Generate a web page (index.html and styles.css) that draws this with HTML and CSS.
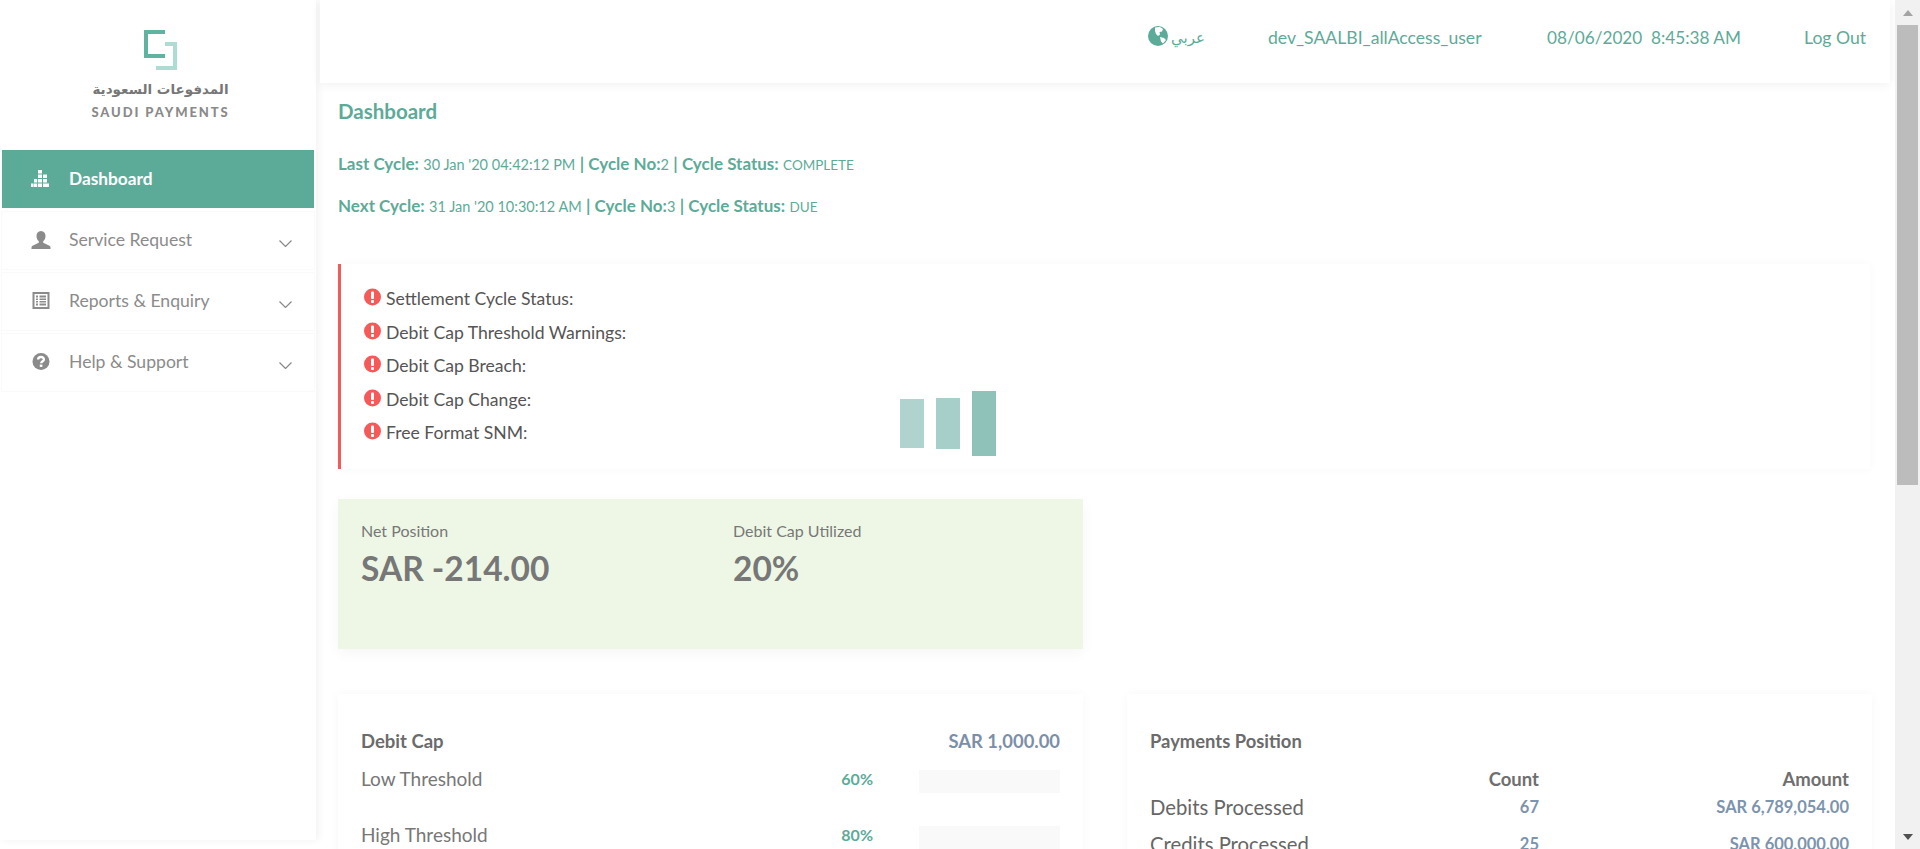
FILE: index.html
```html
<!DOCTYPE html>
<html lang="en">
<head>
<meta charset="utf-8">
<title>Dashboard</title>
<link rel="stylesheet" href="styles.css">
</head>
<body>
<div class="window">
<div class="app">
  <aside class="sidebar">
    <div class="brand">
      <svg class="brand-mark" width="34" height="40" viewBox="0 0 34 40">
        <path class="mark-dark" d="M21 0H0V28H21V24H4V4H21Z"/>
        <path class="mark-light" d="M21 12H33V40H12V36H29V16H21Z"/>
      </svg>
      <div class="brand-ar" lang="ar" dir="rtl">المدفوعات السعودية</div>
      <div class="brand-en">SAUDI PAYMENTS</div>
    </div>
    <nav class="menu">
      <a class="menu-item active">
        <svg class="menu-icon icon-stats" width="18" height="17" viewBox="0 0 18 17">
          <path d="M7 0h4v3.600H7zM7 4.400h4V8H7zM12 4.400h4V8h-4zM3 8.900h3.200v3.600H3zM7 8.900h4v3.600H7zM12 8.900h4v3.600h-4zM0 13.400h2.600V17H0zM3 13.400h3.200V17H3zM7 13.400h4V17H7zM12 13.400h6V17h-6z"/>
        </svg>
        <span>Dashboard</span>
      </a>
      <a class="menu-item">
        <svg class="menu-icon" width="19" height="18" viewBox="0 0 19 18">
          <path d="M9.500 0C12.400 0 14 2.200 14 5c0 2.300-1 4.300-2.300 5.300v1.400L18 14.800c.7.400 1 .9 1 1.700V18H0v-1.500c0-.8.300-1.300 1-1.700l6.300-3.100v-1.400C6 9.300 5 7.300 5 5 5 2.200 6.600 0 9.500 0z"/>
        </svg>
        <span>Service Request</span>
        <svg class="chevron" width="13" height="7" viewBox="0 0 13 7"><path d="M.5.500l6 6 6-6"/></svg>
      </a>
      <a class="menu-item">
        <svg class="menu-icon" width="17" height="17" viewBox="0 0 17 17">
          <path fill-rule="evenodd" d="M0 0h17v17H0zM2 2v13h13V2zM3.500 3.500h2v2h-2zM7 3.500h6.500v2H7zM3.500 6.500h2v1.500h-2zM7 6.500h6.500V8H7zM3.500 9h2v1.500h-2zM7 9h6.500v1.500H7zM3.500 11.500h2v2h-2zM7 11.500h6.500v2H7z"/>
        </svg>
        <span>Reports &amp; Enquiry</span>
        <svg class="chevron" width="13" height="7" viewBox="0 0 13 7"><path d="M.5.500l6 6 6-6"/></svg>
      </a>
      <a class="menu-item">
        <svg class="menu-icon" width="17" height="17" viewBox="0 0 17 17">
          <circle cx="8.500" cy="8.500" r="8.500"/>
          <path class="help-mark" d="M5.600 6.500C5.700 4.900 6.900 4 8.500 4c1.700 0 2.900 1 2.900 2.400 0 1.900-2.700 1.900-2.700 3.900"/>
          <rect class="help-dot" x="7.300" y="11.600" width="2.600" height="2.300"/>
        </svg>
        <span>Help &amp; Support</span>
        <svg class="chevron" width="13" height="7" viewBox="0 0 13 7"><path d="M.5.500l6 6 6-6"/></svg>
      </a>
    </nav>
  </aside>

  <div class="main">
    <header class="topbar">
      <a class="lang">
        <svg class="globe" width="20" height="20" viewBox="0 0 20 20">
          <circle cx="10" cy="10" r="10"/>
          <path class="land" d="M7 1.500l5-.5 3 2-1 2.500-2.500.5.500 2.500-2 1.500-2-2-1-3zM12 11l4 1 2 2-3 3.500-2-2z"/>
        </svg>
        <span class="lang-text" lang="ar" dir="rtl">عربي</span>
      </a>
      <span class="top-link user">dev_SAALBI_allAccess_user</span>
      <span class="top-link clock">08/06/2020&nbsp; 8:45:38 AM</span>
      <a class="top-link logout">Log Out</a>
    </header>

    <main class="content">
      <h1 class="page-title">Dashboard</h1>
      <p class="cycle"><b>Last Cycle:</b> <small>30 Jan '20 04:42:12 PM</small> <b>| Cycle No:</b><small>2</small> <b>| Cycle Status:</b> <small class="status">COMPLETE</small></p>
      <p class="cycle next"><b>Next Cycle:</b> <small>31 Jan '20 10:30:12 AM</small> <b>| Cycle No:</b><small>3</small> <b>| Cycle Status:</b> <small class="status">DUE</small></p>

      <section class="alerts">
        <ul class="alert-list">
          <li class="alert-row"><svg class="alert-icon" width="17" height="18" viewBox="0 0 17 18"><circle cx="8.500" cy="9" r="8.500"/><rect x="7" y="3.500" width="3" height="7.500" rx="1"/><rect x="7" y="12" width="3" height="3" rx="1"/></svg>Settlement Cycle Status:</li>
          <li class="alert-row"><svg class="alert-icon" width="17" height="18" viewBox="0 0 17 18"><circle cx="8.500" cy="9" r="8.500"/><rect x="7" y="3.500" width="3" height="7.500" rx="1"/><rect x="7" y="12" width="3" height="3" rx="1"/></svg>Debit Cap Threshold Warnings:</li>
          <li class="alert-row"><svg class="alert-icon" width="17" height="18" viewBox="0 0 17 18"><circle cx="8.500" cy="9" r="8.500"/><rect x="7" y="3.500" width="3" height="7.500" rx="1"/><rect x="7" y="12" width="3" height="3" rx="1"/></svg>Debit Cap Breach:</li>
          <li class="alert-row"><svg class="alert-icon" width="17" height="18" viewBox="0 0 17 18"><circle cx="8.500" cy="9" r="8.500"/><rect x="7" y="3.500" width="3" height="7.500" rx="1"/><rect x="7" y="12" width="3" height="3" rx="1"/></svg>Debit Cap Change:</li>
          <li class="alert-row"><svg class="alert-icon" width="17" height="18" viewBox="0 0 17 18"><circle cx="8.500" cy="9" r="8.500"/><rect x="7" y="3.500" width="3" height="7.500" rx="1"/><rect x="7" y="12" width="3" height="3" rx="1"/></svg>Free Format SNM:</li>
        </ul>
        <div class="loader">
          <span class="bar bar-a"></span>
          <span class="bar bar-b"></span>
          <span class="bar bar-c"></span>
        </div>
      </section>

      <section class="position">
        <div class="stat">
          <div class="stat-label">Net Position</div>
          <div class="stat-value">SAR -214.00</div>
        </div>
        <div class="stat">
          <div class="stat-label">Debit Cap Utilized</div>
          <div class="stat-value">20%</div>
        </div>
      </section>

      <div class="panels">
        <section class="panel">
          <div class="panel-head">
            <h2 class="panel-title">Debit Cap</h2>
            <span class="cap-amount">SAR 1,000.00</span>
          </div>
          <div class="threshold">
            <span class="threshold-name">Low Threshold</span>
            <span class="threshold-pct">60%</span>
            <span class="threshold-bar"></span>
          </div>
          <div class="threshold">
            <span class="threshold-name">High Threshold</span>
            <span class="threshold-pct">80%</span>
            <span class="threshold-bar"></span>
          </div>
        </section>
        <section class="panel">
          <div class="panel-head">
            <h2 class="panel-title small">Payments Position</h2>
          </div>
          <div class="pay-head">
            <span></span><span>Count</span><span>Amount</span>
          </div>
          <div class="pay-row">
            <span class="pay-name">Debits Processed</span><span class="pay-num">67</span><span class="pay-num">SAR 6,789,054.00</span>
          </div>
          <div class="pay-row">
            <span class="pay-name">Credits Processed</span><span class="pay-num">25</span><span class="pay-num">SAR 600,000.00</span>
          </div>
        </section>
      </div>
    </main>
  </div>
</div>
<div class="scrollbar">
  <div class="scroll-btn"><span class="arrow-up"></span></div>
  <div class="scroll-track"><div class="scroll-thumb"></div></div>
  <div class="scroll-btn"><span class="arrow-down"></span></div>
</div>
</div>
</body>
</html>
```
FILE: styles.css
```css
* { box-sizing: border-box; }
html, body { height: 100%; overflow: hidden; }
body { margin: 0; background: #fff; font-family: Lato, "Open Sans", sans-serif; color: #666; }
p, h1, h2, ul { margin: 0; padding: 0; }
ul { list-style: none; }

.window { display: flex; height: 100vh; overflow: hidden; }
.app { flex: 1 1 0; min-width: 0; display: flex; align-items: flex-start; overflow: hidden; height: 100%; }

.scrollbar { flex: 0 0 25px; display: flex; flex-direction: column; background: #f1f1f1; }
.scroll-btn { flex: 0 0 25px; display: flex; align-items: center; justify-content: center; }
.arrow-up { border-left: 5.500px solid transparent; border-right: 5.500px solid transparent; border-bottom: 6px solid #a3a3a3; }
.arrow-down { border-left: 5.500px solid transparent; border-right: 5.500px solid transparent; border-top: 6px solid #505050; }
.scroll-track { flex: 1 1 0; padding: 0 2px; }
.scroll-thumb { height: 460px; background: #bcbcbc; }

.sidebar { flex: 0 0 316px; height: 840px; background: #fff; box-shadow: 2px 0 8px rgba(0,0,0,.06); padding: 30px 2px 0; }
.brand { height: 120px; display: flex; flex-direction: column; align-items: center; padding-left: 5px; }
.brand-mark { display: block; }
.mark-dark { fill: #5fb3a0; }
.mark-light { fill: #aedcd3; }
.brand-ar { font-family: "DejaVu Sans", sans-serif; font-weight: 700; font-size: 13.500px; line-height: 18px; color: #777; margin-top: 10px; text-align: center; white-space: nowrap; }
.brand-en { font-weight: 900; font-size: 13px; line-height: 16px; letter-spacing: 1.900px; color: #8a8a8a; margin-top: 6px; white-space: nowrap; }

.menu { display: flex; flex-direction: column; gap: 4px; }
.menu-item { display: flex; align-items: center; height: 57px; padding: 0 22px 2px 29px; background: #fff; color: #8b8b8b; font-size: 17.600px; box-shadow: 0 0 0 1px #fafafa; }
.menu-item.active { height: 58px; background: #5cab98; color: #fff; font-weight: 700; font-size: 17.300px; box-shadow: none; }
.menu-icon { flex: 0 0 20px; fill: #8b8b8b; margin-right: 18px; }
.active .menu-icon { fill: #fff; }
.icon-stats { margin-left: -1px; margin-right: 19px; }
.help-mark { fill: none; stroke: #fff; stroke-width: 2.400; }
.help-dot { fill: #fff; }
.chevron { margin-left: auto; margin-top: 7px; fill: none; stroke: #888; stroke-width: 1.200; }

.main { flex: 1 1 0; min-width: 0; }
.topbar { display: flex; align-items: center; height: 83px; margin: 0 5px 0 4px; background: #fff; box-shadow: 0 2px 10px rgba(0,0,0,.06); padding-left: 829px; color: #5cab98; font-size: 17.600px; padding-bottom: 8px; }
.lang { display: flex; align-items: center; width: 120px; margin-left: -1px; }
.globe { fill: #5cab98; margin-top: -4px; }
.land { fill: #fff; }
.lang-text { font-family: "DejaVu Sans", sans-serif; font-size: 15px; margin-left: 3px; }
.top-link { white-space: nowrap; }
.user { width: 279px; }
.clock { width: 257px; font-size: 17.200px; }

.content { padding: 16px 23px 0 22px; }
.page-title { font-size: 20.500px; line-height: 24px; font-weight: 700; color: #5cab98; }
.cycle { margin-top: 29px; line-height: 24px; font-size: 17px; color: #5cab98; white-space: nowrap; }
.cycle.next { margin-top: 17px; }
.cycle b { font-weight: 700; }
.cycle small { font-size: 14.500px; font-weight: 400; }
.cycle small.status { font-size: 13.500px; }

.alerts { display: flex; margin-top: 45px; width: 1532px; height: 205px; padding: 18px 0 0 23px; border-left: 3px solid #f55a5a; background: #fff; box-shadow: 0 0 10px rgba(0,0,0,.03); }
.alert-list { flex: 0 0 536px; }
.alert-row { display: flex; align-items: center; height: 33.500px; font-size: 17.600px; color: #555; }
.alert-icon { fill: #f75858; margin-right: 5px; margin-top: -3px; }
.alert-icon rect { fill: #fff; }
.loader { display: flex; align-items: center; gap: 12px; margin-top: 109px; height: 65px; }
.bar { display: block; width: 24px; }
.bar-a { height: 49px; background: #afd4cf; }
.bar-b { height: 51px; background: #a6cfc9; }
.bar-c { height: 65px; background: #8fc2b9; }

.position { display: flex; width: 745px; height: 150px; margin-top: 30px; padding: 22px 23px 0; background: #eef7e6; box-shadow: 0 4px 14px rgba(0,0,0,.04); }
.stat { flex: 0 0 372px; }
.stat-label { font-size: 16px; line-height: 20px; color: #777; }
.stat-value { margin-top: 7px; font-size: 33.500px; line-height: 40px; font-weight: 700; color: #777; }

.panels { display: grid; grid-template-columns: 745px 1fr; gap: 44px; margin-top: 45px; }
.panel { height: 560px; padding: 35px 23px 0; background: #fff; box-shadow: 0 0 10px rgba(0,0,0,.035); }
.panel-head { display: flex; justify-content: space-between; height: 24px; line-height: 24px; }
.panel-title { font-size: 18.500px; font-weight: 700; color: #6b6b6b; }
.panel-title.small { font-size: 18.400px; }
.cap-amount { font-size: 18.400px; font-weight: 700; color: #7c8fa8; }
.threshold { display: grid; grid-template-columns: 1fr auto 141px; gap: 46px; height: 56px; line-height: 18px; font-size: 19px; color: #777; }
.panel-head + .threshold { margin-top: 17px; }
.threshold-pct { font-size: 16px; font-weight: 700; color: #5cab98; }
.threshold-bar { display: block; height: 23px; background: #f9f9f9; }

.pay-head, .pay-row { display: grid; grid-template-columns: 1fr 80px 310px; }
.pay-head { margin-top: 16px; height: 20px; line-height: 20px; font-size: 18.500px; font-weight: 700; color: #6f6f6f; text-align: right; }
.pay-row { height: 37px; line-height: 36px; }
.pay-name { font-size: 20.300px; color: #666; white-space: nowrap; }
.pay-num { font-size: 16.500px; font-weight: 700; color: #7c94ad; text-align: right; }
```
